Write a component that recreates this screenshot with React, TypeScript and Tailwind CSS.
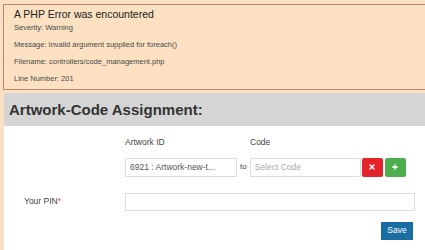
import { Plus, X } from 'lucide-react'

export default function App() {
  return (
    <div className="w-[425px] h-[250px] overflow-hidden bg-[#fbe0c2] pt-[4px] font-['Liberation_Sans',Arial,sans-serif] text-[#333]">
      {/* PHP error box */}
      <div className="ml-[3px] mr-[-4px] h-[86px] border border-[#c4836a] px-[10px] pt-[3px]">
        <div className="text-[10.5px] leading-[13px] text-[#222]">A PHP Error was encountered</div>
        <div className="mt-[2px] flex flex-col gap-[7px] text-[7.5px] leading-[10px] text-[#4a4a4a]">
          <p>Severity: Warning</p>
          <p>Message: Invalid argument supplied for foreach()</p>
          <p>Filename: controllers/code_management.php</p>
          <p>Line Number: 201</p>
        </div>
      </div>

      {/* Panel */}
      <div className="ml-[4px] mt-[3px] h-[160px] bg-white">
        <div className="flex h-[33px] items-center bg-[#d5d5d5] px-[5px] pt-[2px]">
          <h2 className="text-[15px] font-bold text-[#333]">Artwork-Code Assignment:</h2>
        </div>

        <div className="pt-[10px] text-[8.5px] text-[#444]">
          <div className="flex">
            <div className="ml-[121px] w-[125px]">Artwork ID</div>
            <div>Code</div>
          </div>

          <div className="mt-[9px] flex items-center">
            <div className="ml-[121px] flex h-[19px] w-[112px] items-center border border-[#ddd] px-[4px] text-[8.5px] text-[#555]">
              6921 : Artwork-new-t...
            </div>
            <span className="mx-[3px] text-[8px]">to</span>
            <div className="flex h-[19px] w-[111px] items-center border border-[#ddd] px-[4px] text-[#aaa]">
              Select Code
            </div>
            <button className="ml-[1px] flex h-[19px] w-[21px] items-center justify-center rounded-[2px] bg-[#e3242b] text-white">
              <X size={8} strokeWidth={4} />
            </button>
            <button className="ml-[2px] flex h-[19px] w-[21px] items-center justify-center rounded-[2px] bg-[#4cae4c] text-white">
              <Plus size={8} strokeWidth={4} />
            </button>
          </div>

          <div className="mt-[16px] flex items-center">
            <div className="ml-[20px] w-[101px]">
              Your PIN<span className="text-[#d9534f]">*</span>
            </div>
            <div className="h-[18px] w-[290px] border border-[#ddd]" />
          </div>

          <div className="mt-[11px] flex justify-end pr-[12px]">
            <button className="h-[18px] w-[32px] bg-[#1b6ea4] text-[8.5px] text-white">Save</button>
          </div>
        </div>
      </div>
    </div>
  )
}
